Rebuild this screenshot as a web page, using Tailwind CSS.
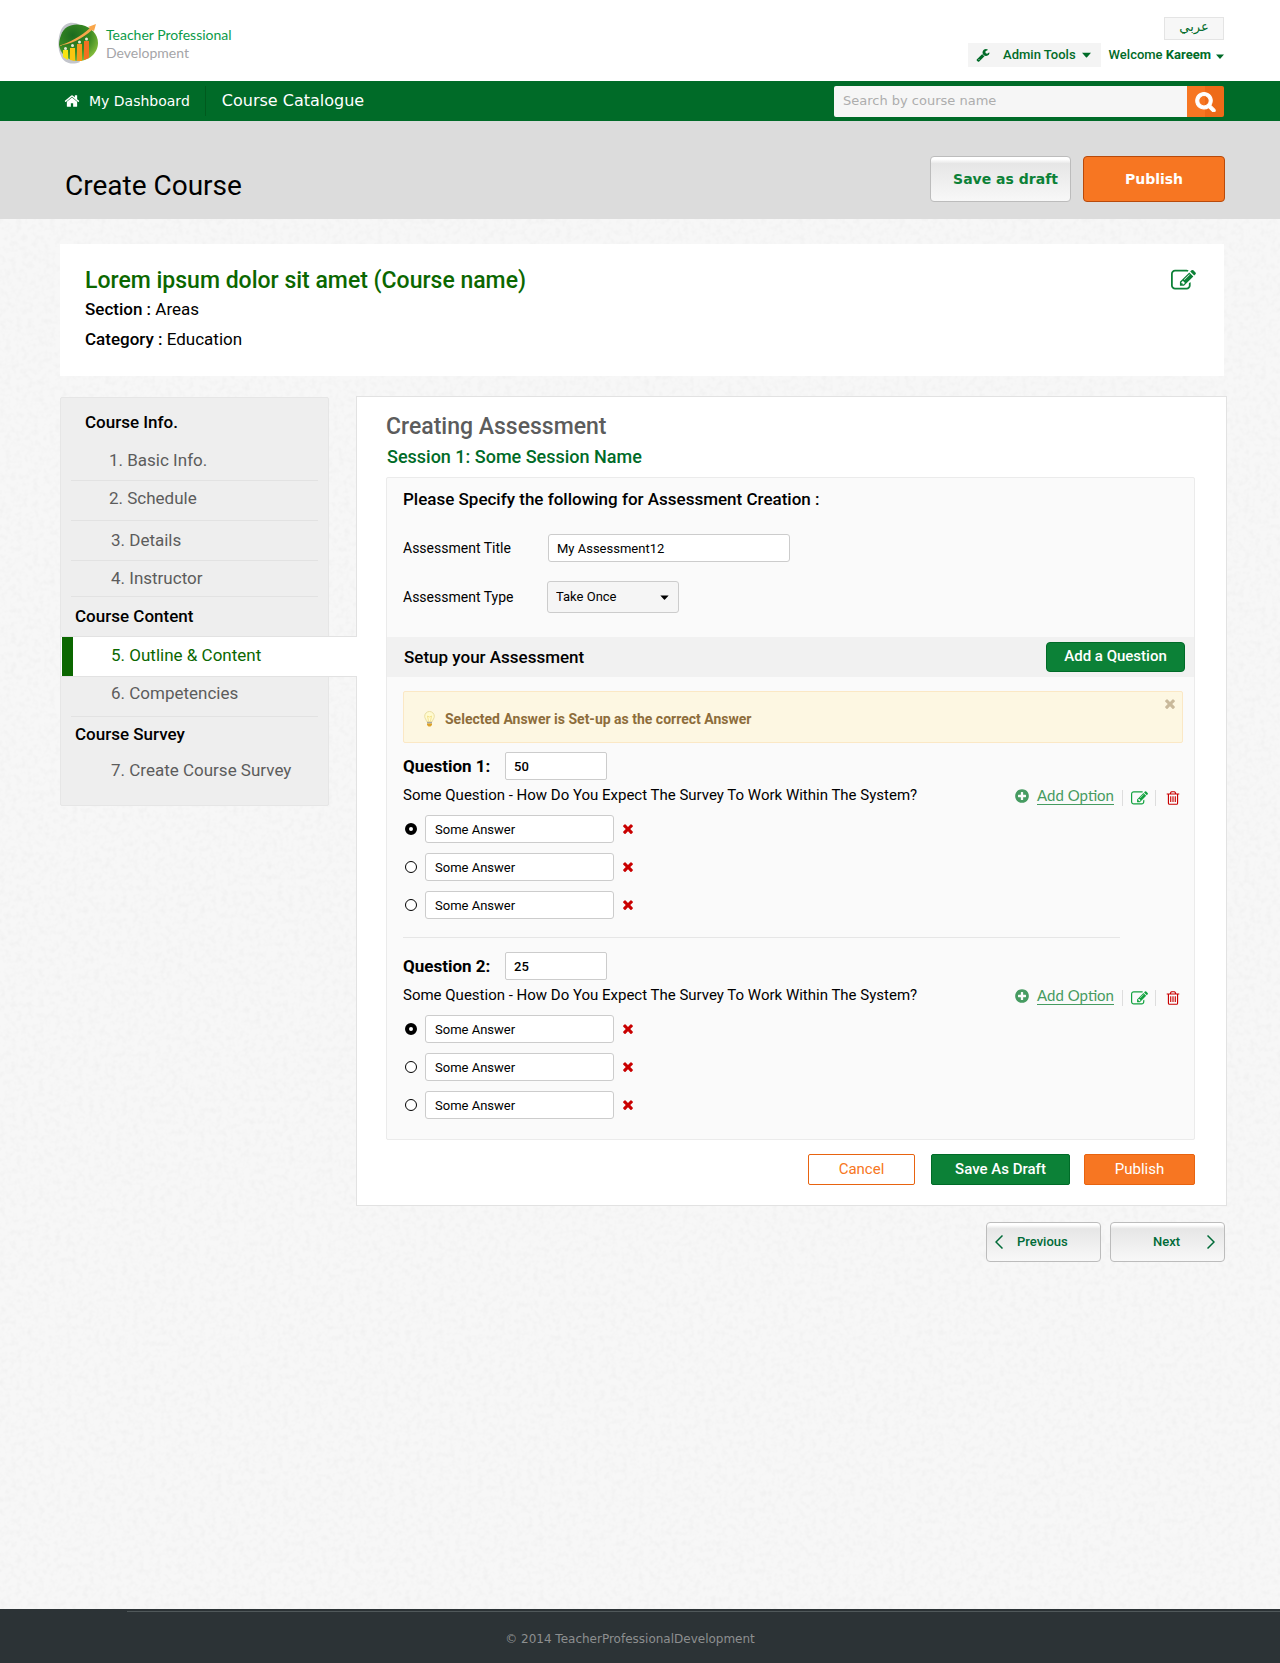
<!DOCTYPE html>
<html lang="en">
<head>
<meta charset="utf-8">
<meta name="viewport" content="width=device-width, initial-scale=1">
<title>Create Course - Teacher Professional Development</title>
<script src="https://cdn.jsdelivr.net/npm/@tailwindcss/browser@4"></script>
</head>
<body class="relative flex min-h-screen flex-col bg-[#f7f7f7] font-[Roboto,sans-serif] text-black">

<!-- Shared icons -->
<svg class="hidden" aria-hidden="true">
  <symbol id="i-home" viewBox="0 0 1792 1792"><path d="M1472 992v480q0 26-19 45t-45 19h-384v-384h-256v384h-384q-26 0-45-19t-19-45v-480q0-1 .5-3t.5-3l575-474 575 474q1 2 1 6zm223-69l-62 74q-8 9-21 11h-3q-13 0-21-7l-692-577-692 577q-12 8-24 7-13-2-21-11l-62-74q-8-10-7-23.5t11-21.5l719-599q32-26 76-26t76 26l244 204v-195q0-14 9-23t23-9h192q14 0 23 9t9 23v408l219 182q10 8 11 21.5t-7 23.5z"/></symbol>
  <symbol id="i-edit" viewBox="0 0 1792 1792"><path d="M888 1184l116-116-152-152-116 116v56h96v96h56zm440-720q-16-16-33 1l-350 350q-17 17-1 33t33-1l350-350q17-17 1-33zm80 594v190q0 119-84.5 203.5t-203.5 84.5h-832q-119 0-203.5-84.5t-84.5-203.5v-832q0-119 84.5-203.5t203.5-84.5h832q63 0 117 25 15 7 18 23 3 17-9 29l-49 49q-14 14-32 8-23-6-45-6h-832q-66 0-113 47t-47 113v832q0 66 47 113t113 47h832q66 0 113-47t47-113v-126q0-13 9-22l64-64q15-15 35-7t20 29zm-96-738l288 288-672 672h-288v-288zm444 132l-92 92-288-288 92-92q28-28 68-28t68 28l152 152q28 28 28 68t-28 68z"/></symbol>
  <symbol id="i-trash" viewBox="0 0 1792 1792"><path d="M704 736v576q0 14-9 23t-23 9h-64q-14 0-23-9t-9-23v-576q0-14 9-23t23-9h64q14 0 23 9t9 23zm256 0v576q0 14-9 23t-23 9h-64q-14 0-23-9t-9-23v-576q0-14 9-23t23-9h64q14 0 23 9t9 23zm256 0v576q0 14-9 23t-23 9h-64q-14 0-23-9t-9-23v-576q0-14 9-23t23-9h64q14 0 23 9t9 23zm128 724v-948h-896v948q0 22 7 40.5t14.5 27 10.5 8.5h832q3 0 10.5-8.5t14.5-27 7-40.5zm-672-1076h448l-48-117q-7-9-17-11h-317q-10 2-17 11zm928 32v64q0 14-9 23t-23 9h-96v948q0 83-47 143.5t-113 60.5h-832q-66 0-113-58.5t-47-141.5v-952h-96q-14 0-23-9t-9-23v-64q0-14 9-23t23-9h309l70-167q15-37 54-63t79-26h320q40 0 79 26t54 63l70 167h309q14 0 23 9t9 23z"/></symbol>
  <symbol id="i-plus" viewBox="0 0 1792 1792"><path d="M1344 960v-128q0-26-19-45t-45-19h-256v-256q0-26-19-45t-45-19h-128q-26 0-45 19t-19 45v256h-256q-26 0-45 19t-19 45v128q0 26 19 45t45 19h256v256q0 26 19 45t45 19h128q26 0 45-19t19-45v-256h256q26 0 45-19t19-45zm320-64q0 209-103 385.5t-279.5 279.5-385.5 103-385.5-103-279.5-279.5-103-385.5 103-385.5 279.5-279.5 385.5-103 385.5 103 279.5 279.5 103 385.5z"/></symbol>
  <symbol id="i-times" viewBox="302 338 1188 1216"><path d="M1490 1322q0 40-28 68l-136 136q-28 28-68 28t-68-28l-294-294-294 294q-28 28-68 28t-68-28l-136-136q-28-28-28-68t28-68l294-294-294-294q-28-28-28-68t28-68l136-136q28-28 68-28t68 28l294 294 294-294q28-28 68-28t68 28l136 136q28 28 28 68t-28 68l-294 294 294 294q28 28 28 68z"/></symbol>
  <symbol id="i-wrench" viewBox="0 0 1792 1792"><path d="M448 1472q0-26-19-45t-45-19-45 19-19 45 19 45 45 19 45-19 19-45zm644-420l-682 682q-37 37-90 37-52 0-91-37l-106-108q-38-36-38-90 0-53 38-91l681-681q39 98 114.5 173.5t173.5 114.5zm634-435q0 39-23 106-47 134-164.5 217.5t-258.5 83.5q-185 0-316.5-131.5t-131.5-316.5 131.5-316.5 316.5-131.5q58 0 121.5 16.5t107.5 46.5q16 11 16 28t-16 28l-293 169v224l193 107q5-3 79-48.5t135.5-81 70.5-35.5q15 0 23.5 10t8.5 25z"/></symbol>
  <symbol id="i-search" viewBox="0 0 1792 1792"><path stroke-width="90" stroke="currentColor" d="M1216 832q0-185-131.5-316.5t-316.5-131.5-316.5 131.5-131.5 316.5 131.5 316.5 316.5 131.5 316.5-131.5 131.5-316.5zm512 832q0 52-38 90t-90 38q-54 0-90-38l-343-342q-179 124-399 124-143 0-273.5-55.5t-225-150-150-225-55.5-273.5 55.5-273.5 150-225 225-150 273.5-55.5 273.5 55.5 225 150 150 225 55.5 273.5q0 220-124 399l343 343q37 37 37 90z"/></symbol>
  <symbol id="i-caret" viewBox="0 0 10 6"><path d="M0 .5h10L5.600 5.400a.8.8 0 0 1-1.200 0z"/></symbol>
</svg>

<header class="flex h-[81px] justify-between bg-white pr-14 pl-[58px]">
  <a href="#" class="flex items-start gap-[6px] pt-[22px]">
    <svg class="size-[42px]" viewBox="0 0 42 42" aria-hidden="true">
      <defs>
        <radialGradient id="leaf" cx=".35" cy=".3" r=".75"><stop offset="0" stop-color="#1c6b1f"/><stop offset=".6" stop-color="#3a8a22"/><stop offset="1" stop-color="#86bd3c"/></radialGradient>
      </defs>
      <path d="M3 8C7 0 15-1 22 3L12 20l10 20C13 44 5 40 3 34-1 26 0 15 3 8z" fill="#c3c5cc"/>
      <path d="M3 13C6 4 15 1 24 3c9 2 16 9 16 18 0 10-9 18-20 18C8 39 2 30 1 23c0-4 1-7 2-10z" fill="url(#leaf)"/>
      <path d="M5 28h5v10l-5-3z" fill="#f7e311"/><path d="M12 26h5v13l-5-1z" fill="#fbc60f"/><path d="M19 22h5v17h-5z" fill="#f59a1c"/><path d="M26 19h5v17l-5 2z" fill="#f37021"/>
      <g fill="#e6ead9"><circle cx="7.500" cy="26.500" r="1.500"/><circle cx="14.500" cy="23.500" r="1.500"/><circle cx="21.500" cy="20" r="1.500"/><circle cx="28.500" cy="17" r="1.500"/></g>
      <path d="M0 24C13 20 23 14 32 6l-2-1 8-3-2 7-2-1C24 17 13 22 0 24z" fill="#f9a64a"/>
    </svg>
    <span class="pt-1 font-[Lato,sans-serif] text-sm/[18px]">
      <span class="block text-[#0c9b49]">Teacher Professional</span>
      <span class="block text-[#a5a5a8]">Development</span>
    </span>
  </a>
  <div class="flex flex-col items-end gap-[3px] pt-[17px] text-[13px] text-[#006b28]">
    <a href="#" lang="ar" dir="rtl" class="flex h-[23px] w-[60px] items-center justify-center border border-[#e4e4e4] bg-[#f7f7f7] pb-1 font-['DejaVu_Sans',sans-serif]">عربي</a>
    <div class="flex items-center gap-2 font-medium">
      <button type="button" class="flex h-6 items-center bg-[#f4f4f4] pr-[10px] pl-2">
        <svg class="mr-[13px] size-[14px] fill-current" aria-hidden="true"><use href="#i-wrench"/></svg>
        Admin Tools
        <svg class="ml-[6px] h-[6px] w-[9px] fill-current" aria-hidden="true"><use href="#i-caret"/></svg>
      </button>
      <button type="button" class="flex items-center gap-[5px]"><span>Welcome <b>Kareem</b></span>
        <svg class="mt-[2px] h-[5px] w-2 fill-current" aria-hidden="true"><use href="#i-caret"/></svg>
      </button>
    </div>
  </div>
</header>

<nav class="flex h-10 items-center justify-between bg-[#006b28] pr-14 pl-16 font-['DejaVu_Sans',sans-serif] text-white">
  <div class="flex items-center">
    <a href="#" class="flex h-[30px] items-center gap-[9px] border-r border-[#005a1e] pr-[15px] text-sm">
      <svg class="size-4 fill-current" aria-hidden="true"><use href="#i-home"/></svg>My Dashboard</a>
    <a href="#" class="pl-4 text-base">Course Catalogue</a>
  </div>
  <form class="flex h-[31px]" role="search">
    <input type="search" aria-label="Search by course name" placeholder="Search by course name" class="w-[353px] rounded-l-xs bg-[#f6f6f6] px-[9px] text-[13px] placeholder:text-[#adadad]">
    <button type="button" aria-label="Search" class="flex w-[37px] items-center justify-center rounded-r-xs bg-linear-to-r from-[#f77622] from-50% to-[#ee6a18] to-50%">
      <svg class="size-[21px] overflow-visible fill-current" aria-hidden="true"><use href="#i-search"/></svg>
    </button>
  </form>
</nav>

<div class="flex h-[98px] items-center justify-between bg-[#dcdcdc] pr-[55px] pl-[65px]">
  <h1 class="pt-8 text-[28px]/8">Create Course</h1>
  <div class="flex gap-3 pt-[17px] font-['DejaVu_Sans',sans-serif] text-sm font-bold">
    <button type="button" class="h-[46px] w-[141px] rounded border border-[#bcbcbc] bg-linear-to-b from-white from-5% via-[#e6e6e6] via-15% to-[#f8f8f8] pl-[10px] text-[#0c8137]">Save as draft</button>
    <button type="button" class="h-[46px] w-[142px] rounded border border-[#b84a0b] bg-[#f77622] text-white">Publish</button>
  </div>
</div>

<div class="relative flex flex-1 flex-col">
  <!-- Paper grain behind the page content -->
  <svg class="absolute inset-0 h-full w-full" aria-hidden="true">
    <filter id="grain" x="0" y="0" width="100%" height="100%"><feTurbulence type="fractalNoise" baseFrequency=".18" numOctaves="2" seed="4"/><feColorMatrix values="0 0 0 0 .8  0 0 0 0 .8  0 0 0 0 .8  0.800 0 0 0 -.34"/></filter>
    <rect width="100%" height="100%" filter="url(#grain)"/>
  </svg>

  <main class="relative flex-1 pt-[25px] pr-[53px] pb-10 pl-[60px]">
    <section class="mr-[3px] flex h-[132px] items-start justify-between bg-white pt-6 pr-7 pl-[25px]">
      <div>
        <h2 class="text-[23px]/[26px] font-medium text-[#0b6700]">Lorem ipsum dolor sit amet (Course name)</h2>
        <p class="text-[17px]/[30px]"><span class="font-medium">Section :</span> Areas</p>
        <p class="text-[17px]/[30px]"><span class="font-medium">Category :</span> Education</p>
      </div>
      <button type="button" aria-label="Edit course" class="text-[#0c8137]"><svg class="size-[25px] fill-current" aria-hidden="true"><use href="#i-edit"/></svg></button>
    </section>

    <div class="mt-5 flex items-start">
      <nav class="relative z-10 mt-px w-[297px] shrink-0 text-[17px]" aria-label="Course steps">
        <div class="mr-[28px] h-[409px] rounded-xs border border-[#e6e6e6] bg-[#eee] text-[#5c5c5c]">
          <h3 class="flex h-11 items-center pt-[6px] pl-6 font-medium text-black">Course Info.</h3>
          <ul class="px-[10px]">
            <li class="flex h-[39px] items-center border-b border-[#e2e2e2] pl-[38px]"><a href="#">1. Basic Info.</a></li>
            <li class="flex h-10 items-center border-b border-[#e2e2e2] pb-1 pl-[38px]"><a href="#">2. Schedule</a></li>
            <li class="flex h-10 items-center border-b border-[#e2e2e2] pl-10"><a href="#">3. Details</a></li>
            <li class="flex h-9 items-center border-b border-[#e2e2e2] pl-10"><a href="#">4. Instructor</a></li>
          </ul>
          <h3 class="flex h-[39px] items-center pl-[14px] font-medium text-black">Course Content</h3>
          <ul class="px-[10px]">
            <li class="-mr-[39px] -ml-[10px] flex h-[41px] items-center border-y border-[#e2e2e2] bg-white text-[#0b6700]"><span class="mr-[38px] ml-px h-full w-[11px] bg-[#0b6700]"></span><a href="#" aria-current="page" class="pb-[2px]">5. Outline &amp; Content</a></li>
            <li class="flex h-10 items-center border-b border-[#e2e2e2] pb-[6px] pl-10"><a href="#">6. Competencies</a></li>
          </ul>
          <h3 class="flex h-9 items-center pl-[14px] font-medium text-black">Course Survey</h3>
          <ul class="px-[10px]"><li class="flex h-9 items-center pl-10"><a href="#">7. Create Course Survey</a></li></ul>
        </div>
      </nav>

      <div class="-ml-px min-w-0 flex-1">
        <section class="border border-[#e2e2e2] bg-white px-[29px] pt-[15px] pb-5">
          <h2 class="text-[23px]/[29px] font-medium text-[#5c5c5c]">Creating Assessment</h2>
          <h3 class="pl-px text-lg/8 font-medium text-[#006b28]">Session 1: Some Session Name</h3>

          <form class="mt-1 mr-[2px] rounded-xs border border-[#ebebeb] bg-[#fafafa] text-sm">
            <div class="h-[159px] px-4 pt-2">
              <p class="text-[17px]/[26px] font-medium">Please Specify the following for Assessment Creation :</p>
              <div class="mt-[22px] flex items-center"><label for="title" class="w-[145px]">Assessment Title</label>
                <input id="title" type="text" value="My Assessment12" class="h-7 w-[242px] rounded-[3px] border border-[#ccc] bg-white px-2 text-[13px]"></div>
              <div class="mt-[19px] flex items-center"><label for="type" class="w-36">Assessment Type</label>
                <div class="relative">
                  <select id="type" class="h-8 w-[132px] appearance-none rounded-[3px] border border-[#ccc] bg-[#f5f5f5] px-2 text-[13px]"><option>Take Once</option><option>Take Many</option></select>
                  <svg class="pointer-events-none absolute top-[14px] right-[10px] h-[5px] w-[9px] fill-black" aria-hidden="true"><use href="#i-caret"/></svg>
                </div></div>
            </div>

            <div class="flex h-10 items-center justify-between bg-[#f1f1f1] pr-[9px] pl-[17px]">
              <h4 class="text-[17px] font-medium">Setup your Assessment</h4>
              <button type="button" class="h-[30px] w-[139px] rounded border border-[#006b28] bg-[#0c8137] text-[15px] font-medium text-white">Add a Question</button>
            </div>

            <div class="px-4 pt-[14px] pb-5">
              <div role="status" class="-mr-[5px] flex h-[52px] justify-between rounded-xs border border-[#fbe8c5] bg-[#fdf7e2] pt-[7px] pr-[7px] pl-5 text-[#8d6d3b]">
                <p class="flex items-center gap-[10px] self-center pb-1 text-sm font-bold">
                  <svg class="h-4 w-[11px]" viewBox="0 0 11 16" aria-hidden="true"><path d="M5.500.5a4.800 4.800 0 0 1 4.800 4.800c0 2-1.500 3.200-2 5.200H2.700C2.200 8.500.7 7.300.7 5.300A4.800 4.800 0 0 1 5.500.5z" fill="#fffbd0" stroke="#e9dca0"/><path d="M3.500 5l1 5M7.500 5l-1 5M3.500 5l2 1 2-1" fill="none" stroke="#f0d976" stroke-width=".7"/><path d="M3 11h5v1.500H3z" fill="#a8a8a0"/><path d="M3 12.500h5v1.500L6.500 15.500h-2L3 14z" fill="#dda229"/></svg>
                  Selected Answer is Set-up as the correct Answer</p>
                <button type="button" aria-label="Dismiss" class="size-[10px] text-[#c9b99b]"><svg class="size-[10px] fill-current" aria-hidden="true"><use href="#i-times"/></svg></button>
              </div>

              <fieldset class="mt-[9px]">
                <div class="flex h-7 items-center"><label for="q1" class="w-[102px] text-[17px] font-bold">Question 1:</label>
                  <input id="q1" type="text" value="50" class="h-7 w-[102px] rounded-xs border border-[#ccc] bg-white px-2 text-[13px] font-medium"></div>
                <div class="flex h-8 items-center justify-between text-[15px]">
                  <p>Some Question - How Do You Expect The Survey To Work Within The System?</p>
                  <div class="-mr-[3px] flex items-center">
                    <svg class="mr-[7px] size-4 fill-[#469b61]" aria-hidden="true"><use href="#i-plus"/></svg>
                    <a href="#" class="border-b border-[#469b61] font-[Lato,sans-serif] text-[15px]/[17px] text-[#469b61]">Add Option</a>
                    <button type="button" aria-label="Edit question" class="mt-1 ml-2 flex h-4 w-[34px] items-center justify-center border-x border-[#ddd] text-[#12a23f]"><svg class="size-[17px] fill-current" aria-hidden="true"><use href="#i-edit"/></svg></button>
                    <button type="button" aria-label="Delete question" class="mt-1 ml-[9px] text-[#c90000]"><svg class="size-4 fill-current" aria-hidden="true"><use href="#i-trash"/></svg></button>
                  </div>
                </div>
                <ul class="mt-[3px] flex flex-col gap-[10px]">
                  <li class="flex items-center"><input type="radio" name="a1" checked aria-label="Answer 1 is correct" class="mx-[2px] size-3 appearance-none rounded-full border border-black bg-white checked:border-4"><input type="text" aria-label="Answer 1" value="Some Answer" class="ml-[6px] h-7 w-[189px] rounded-[3px] border border-[#ccc] bg-white px-[9px] text-[13px]"><button type="button" aria-label="Remove answer 1" class="ml-[9px] text-[#c90000]"><svg class="size-[10px] fill-current" aria-hidden="true"><use href="#i-times"/></svg></button></li>
                  <li class="flex items-center"><input type="radio" name="a1" aria-label="Answer 2 is correct" class="mx-[2px] size-3 appearance-none rounded-full border border-black bg-white checked:border-4"><input type="text" aria-label="Answer 2" value="Some Answer" class="ml-[6px] h-7 w-[189px] rounded-[3px] border border-[#ccc] bg-white px-[9px] text-[13px]"><button type="button" aria-label="Remove answer 2" class="ml-[9px] text-[#c90000]"><svg class="size-[10px] fill-current" aria-hidden="true"><use href="#i-times"/></svg></button></li>
                  <li class="flex items-center"><input type="radio" name="a1" aria-label="Answer 3 is correct" class="mx-[2px] size-3 appearance-none rounded-full border border-black bg-white checked:border-4"><input type="text" aria-label="Answer 3" value="Some Answer" class="ml-[6px] h-7 w-[189px] rounded-[3px] border border-[#ccc] bg-white px-[9px] text-[13px]"><button type="button" aria-label="Remove answer 3" class="ml-[9px] text-[#c90000]"><svg class="size-[10px] fill-current" aria-hidden="true"><use href="#i-times"/></svg></button></li>
                </ul>
              </fieldset>

              <hr class="mt-[18px] mr-[58px] mb-[14px] border-[#e6e6e6]">

              <fieldset>
                <div class="flex h-7 items-center"><label for="q2" class="w-[102px] text-[17px] font-bold">Question 2:</label>
                  <input id="q2" type="text" value="25" class="h-7 w-[102px] rounded-xs border border-[#ccc] bg-white px-2 text-[13px] font-medium"></div>
                <div class="flex h-8 items-center justify-between text-[15px]">
                  <p>Some Question - How Do You Expect The Survey To Work Within The System?</p>
                  <div class="-mr-[3px] flex items-center">
                    <svg class="mr-[7px] size-4 fill-[#469b61]" aria-hidden="true"><use href="#i-plus"/></svg>
                    <a href="#" class="border-b border-[#469b61] font-[Lato,sans-serif] text-[15px]/[17px] text-[#469b61]">Add Option</a>
                    <button type="button" aria-label="Edit question" class="mt-1 ml-2 flex h-4 w-[34px] items-center justify-center border-x border-[#ddd] text-[#12a23f]"><svg class="size-[17px] fill-current" aria-hidden="true"><use href="#i-edit"/></svg></button>
                    <button type="button" aria-label="Delete question" class="mt-1 ml-[9px] text-[#c90000]"><svg class="size-4 fill-current" aria-hidden="true"><use href="#i-trash"/></svg></button>
                  </div>
                </div>
                <ul class="mt-[3px] flex flex-col gap-[10px]">
                  <li class="flex items-center"><input type="radio" name="a2" checked aria-label="Answer 1 is correct" class="mx-[2px] size-3 appearance-none rounded-full border border-black bg-white checked:border-4"><input type="text" aria-label="Answer 1" value="Some Answer" class="ml-[6px] h-7 w-[189px] rounded-[3px] border border-[#ccc] bg-white px-[9px] text-[13px]"><button type="button" aria-label="Remove answer 1" class="ml-[9px] text-[#c90000]"><svg class="size-[10px] fill-current" aria-hidden="true"><use href="#i-times"/></svg></button></li>
                  <li class="flex items-center"><input type="radio" name="a2" aria-label="Answer 2 is correct" class="mx-[2px] size-3 appearance-none rounded-full border border-black bg-white checked:border-4"><input type="text" aria-label="Answer 2" value="Some Answer" class="ml-[6px] h-7 w-[189px] rounded-[3px] border border-[#ccc] bg-white px-[9px] text-[13px]"><button type="button" aria-label="Remove answer 2" class="ml-[9px] text-[#c90000]"><svg class="size-[10px] fill-current" aria-hidden="true"><use href="#i-times"/></svg></button></li>
                  <li class="flex items-center"><input type="radio" name="a2" aria-label="Answer 3 is correct" class="mx-[2px] size-3 appearance-none rounded-full border border-black bg-white checked:border-4"><input type="text" aria-label="Answer 3" value="Some Answer" class="ml-[6px] h-7 w-[189px] rounded-[3px] border border-[#ccc] bg-white px-[9px] text-[13px]"><button type="button" aria-label="Remove answer 3" class="ml-[9px] text-[#c90000]"><svg class="size-[10px] fill-current" aria-hidden="true"><use href="#i-times"/></svg></button></li>
                </ul>
              </fieldset>
            </div>
          </form>

          <div class="mt-[14px] mr-[2px] flex justify-end text-[15px]">
            <button type="button" class="h-[31px] w-[107px] rounded-xs border border-[#e8630f] bg-white text-[#f77622]">Cancel</button>
            <button type="button" class="ml-4 h-[31px] w-[139px] rounded-xs border border-[#006b28] bg-[#0c8137] font-medium text-white">Save As Draft</button>
            <button type="button" class="ml-[14px] h-[31px] w-[111px] rounded-xs border border-[#e8630f] bg-[#f77622] text-white">Publish</button>
          </div>
        </section>

        <div class="mt-4 mr-[2px] flex justify-end gap-[9px] text-[13px] font-medium text-[#006b38]">
          <button type="button" class="flex h-10 w-[115px] items-center gap-[14px] rounded border border-[#bcbcbc] bg-linear-to-b from-white from-5% via-[#e6e6e6] via-15% to-[#f8f8f8] px-2"><svg class="h-[14px] w-2 fill-none stroke-current" viewBox="0 0 8 14" aria-hidden="true"><path d="M7.500.5L1 7l6.500 6.500" stroke-width="1.500"/></svg>Previous</button>
          <button type="button" class="flex h-10 w-[115px] items-center justify-between rounded border border-[#bcbcbc] bg-linear-to-b from-white from-5% via-[#e6e6e6] via-15% to-[#f8f8f8] pr-[9px] pl-[42px]">Next<svg class="h-[14px] w-2 fill-none stroke-current" viewBox="0 0 8 14" aria-hidden="true"><path d="M.5.5L7 7 .5 13.500" stroke-width="1.500"/></svg></button>
        </div>
      </div>
    </div>
  </main>
</div>

<footer class="h-[54px] bg-[#2c3336] pt-[2px] font-['DejaVu_Sans',sans-serif] text-xs text-[#8d8f90]">
  <div class="ml-[127px] border-t border-[#50585a]"></div>
  <p class="pt-[19px] pr-5 text-center">© 2014 TeacherProfessionalDevelopment</p>
</footer>
</body>
</html>
